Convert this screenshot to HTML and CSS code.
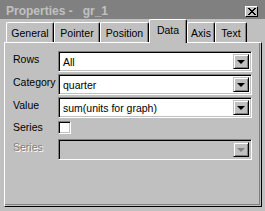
FILE: index.html
```html
<!DOCTYPE html>
<html lang="en">

<head>
    <meta charset="UTF-8">
    <title>Properties - gr_1</title>
    <link rel="stylesheet" href="styles.css">
</head>

<body>
    <div class="window">
        <div class="titlebar">
            <div class="title">Properties -&nbsp;&nbsp;&nbsp;gr_1</div>
            <div class="close">
                <svg width="8" height="7" viewBox="0 0 8 7">
                    <path d="M0 0h2v1h1v1h2v-1h1v-1h2v1h-1v1h-1v1h-1v1h1v1h1v1h1v1h-2v-1h-1v-1h-2v1h-1v1h-2v-1h1v-1h1v-1h1v-1h-1v-1h-1v-1h-1z" fill="#000"/>
                </svg>
            </div>
        </div>

        <div class="body">
            <div class="tabs">
                <div class="tab w-general">General</div>
                <div class="tab w-pointer">Pointer</div>
                <div class="tab w-position">Position</div>
                <div class="tab active w-data">Data</div>
                <div class="tab w-axis">Axis</div>
                <div class="tab w-text">Text</div>
            </div>

            <div class="panel">
                <div class="row">
                    <div class="label">Rows</div>
                    <div class="combo">
                        <div class="value">All</div>
                        <div class="drop"><span class="arrow"></span></div>
                    </div>
                </div>
                <div class="row">
                    <div class="label">Category</div>
                    <div class="combo">
                        <div class="value">quarter</div>
                        <div class="drop"><span class="arrow"></span></div>
                    </div>
                </div>
                <div class="row">
                    <div class="label">Value</div>
                    <div class="combo">
                        <div class="value">sum(units for graph)</div>
                        <div class="drop"><span class="arrow"></span></div>
                    </div>
                </div>
                <div class="row check-row">
                    <div class="label">Series</div>
                    <div class="checkbox"></div>
                </div>
                <div class="row">
                    <div class="label disabled">Series</div>
                    <div class="combo off">
                        <div class="value"></div>
                        <div class="drop"><span class="arrow"></span></div>
                    </div>
                </div>
            </div>
        </div>
    </div>
</body>

</html>
```

FILE: styles.css
```css
body {
    margin: 0;
    background: #c0c0c0;
    font-family: "Liberation Sans", Arial, sans-serif;
    font-size: 10px;
    color: #000;
}

.window {
    width: 265px;
    height: 211px;
    background: #c0c0c0;
    overflow: hidden;
}

.titlebar {
    display: flex;
    align-items: center;
    height: 19px;
    background: #808080;
    padding-left: 6px;
    padding-right: 7px;
}

.title {
    flex: 1;
    color: #c0c0c0;
    font-weight: bold;
    font-size: 12px;
    padding-top: 3px;
}

.close {
    width: 11px;
    height: 9px;
    margin-top: 3px;
    background: #c0c0c0;
    border-top: 1px solid #fff;
    border-left: 1px solid #fff;
    border-right: 1px solid #000;
    border-bottom: 1px solid #000;
    display: flex;
    align-items: center;
    justify-content: center;
}

.close svg {
    display: block;
}

.body {
    padding-left: 4px;
}

.tabs {
    display: flex;
    align-items: flex-end;
    height: 23px;
    padding-left: 2px;
}

.tab {
    box-sizing: border-box;
    height: 20px;
    border-top: 1px solid #fff;
    border-left: 1px solid #fff;
    border-right: 1px solid #000;
    border-radius: 2px 2px 0 0;
    box-shadow: inset -1px 0 #808080;
    text-align: center;
    padding-top: 4px;
    font-size: 10.5px;
}

.tab.active {
    height: 24px;
    margin-bottom: -1px;
    padding-top: 4px;
    background: #c0c0c0;
    position: relative;
    z-index: 1;
}

.w-general { width: 48px; }
.w-pointer { width: 46px; }
.w-position { width: 49px; }
.w-data { width: 38px; }
.w-axis { width: 28px; }
.w-text { width: 32px; }

.panel {
    box-sizing: border-box;
    width: 258px;
    height: 165px;
    border-top: 1px solid #fff;
    border-left: 1px solid #fff;
    border-right: 1px solid #000;
    border-bottom: 1px solid #000;
    box-shadow: inset -1px -1px #c0c0c0, inset -2px -2px #808080;
    padding: 8px 0 0 8px;
}

.row {
    display: flex;
    align-items: flex-start;
    height: 21px;
    margin-bottom: 2px;
}

.label {
    width: 45px;
    padding-top: 2px;
    font-size: 10.5px;
}

.label.disabled {
    color: #808080;
    text-shadow: 1px 1px #fff;
}

.combo {
    box-sizing: border-box;
    display: flex;
    width: 194px;
    height: 21px;
    border-top: 1px solid #808080;
    border-left: 1px solid #808080;
    border-right: 1px solid #fff;
    border-bottom: 1px solid #fff;
    box-shadow: inset 1px 1px #000, inset -1px -1px #c0c0c0;
    background: #fff;
    padding: 2px;
}

.combo.off {
    background: #c0c0c0;
}

.value {
    flex: 1;
    padding-left: 2px;
    padding-top: 2px;
    font-size: 10.5px;
}

.drop {
    box-sizing: border-box;
    width: 16px;
    height: 15px;
    background: #c0c0c0;
    border-top: 1px solid #c0c0c0;
    border-left: 1px solid #c0c0c0;
    border-right: 1px solid #000;
    border-bottom: 1px solid #000;
    box-shadow: inset 1px 1px #fff, inset -1px -1px #808080;
    display: flex;
    align-items: center;
    justify-content: center;
}

.arrow {
    width: 0;
    height: 0;
    border-left: 4px solid transparent;
    border-right: 4px solid transparent;
    border-top: 4px solid #000;
}

.combo.off .arrow {
    border-top-color: #808080;
}

.check-row {
    height: 13px;
    margin-top: 3px;
    margin-bottom: 5px;
}

.check-row .label {
    padding-top: 0;
}

.checkbox {
    box-sizing: border-box;
    width: 13px;
    height: 13px;
    background: #fff;
    border-top: 1px solid #808080;
    border-left: 1px solid #808080;
    border-right: 1px solid #fff;
    border-bottom: 1px solid #fff;
    box-shadow: inset 1px 1px #000, inset -1px -1px #c0c0c0;
}
```
